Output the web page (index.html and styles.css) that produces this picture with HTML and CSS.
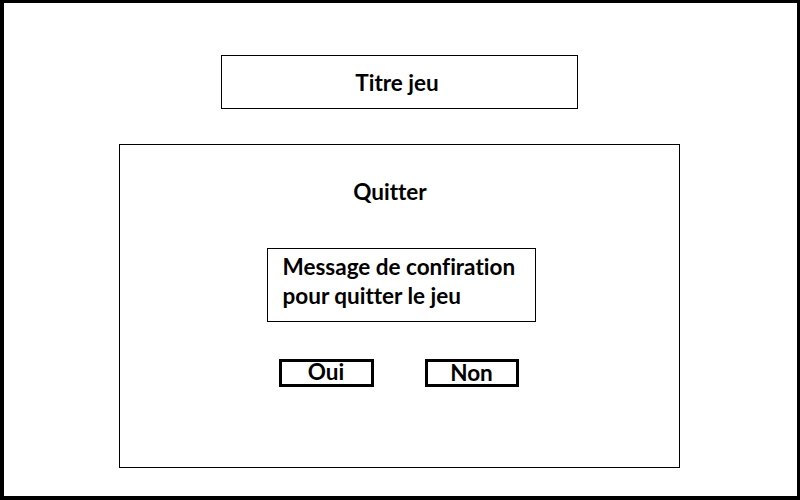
FILE: index.html
```html
<!DOCTYPE html>
<html lang="fr">
<head>
<meta charset="utf-8">
<title>Quitter</title>
<link rel="stylesheet" href="styles.css">
</head>
<body>
<div class="frame">
  <div class="title-box">Titre jeu</div>
  <div class="dialog">
    <div class="dialog-title">Quitter</div>
    <div class="message">Message de confiration<br>pour quitter le jeu</div>
    <div class="actions">
      <div class="btn btn-yes">Oui</div>
      <div class="btn btn-no">Non</div>
    </div>
  </div>
</div>
</body>
</html>
```

FILE: styles.css
```css
html, body {
  margin: 0;
  padding: 0;
  background: #fff;
}
body {
  font-family: Lato, "Open Sans", "Liberation Sans", sans-serif;
  font-weight: 700;
  font-variant-ligatures: none;
  color: #000;
}
.frame {
  box-sizing: border-box;
  width: 800px;
  height: 500px;
  border-style: solid;
  border-color: #000;
  border-width: 3px 3px 4px 4px;
  display: flex;
  flex-direction: column;
  align-items: center;
}
.title-box {
  box-sizing: border-box;
  width: 357px;
  height: 54px;
  margin-top: 52px;
  margin-right: 2px;
  padding-right: 5px;
  border: 1px solid #000;
  display: flex;
  align-items: center;
  justify-content: center;
  font-size: 22.5px;
}
.dialog {
  box-sizing: border-box;
  width: 561px;
  height: 324px;
  margin-top: 35px;
  margin-right: 2px;
  border: 1px solid #000;
  display: flex;
  flex-direction: column;
  align-items: center;
}
.dialog-title {
  margin-top: 35px;
  margin-right: 19px;
  font-size: 22.5px;
  line-height: 24px;
}
.message {
  box-sizing: border-box;
  width: 269px;
  height: 74px;
  margin-top: 44px;
  margin-left: 3px;
  border: 1px solid #000;
  padding: 3px 0 0 15px;
  font-size: 22.5px;
  line-height: 29px;
}
.actions {
  display: flex;
  gap: 51px;
  margin-top: 37px;
  margin-right: 2px;
}
.btn {
  box-sizing: border-box;
  height: 28px;
  border: 3px solid #000;
  display: flex;
  justify-content: center;
  align-items: center;
  font-size: 22.5px;
  line-height: 20px;
}
.btn-yes {
  width: 95px;
  padding-bottom: 3px;
}
.btn-no {
  width: 94px;
}
```
